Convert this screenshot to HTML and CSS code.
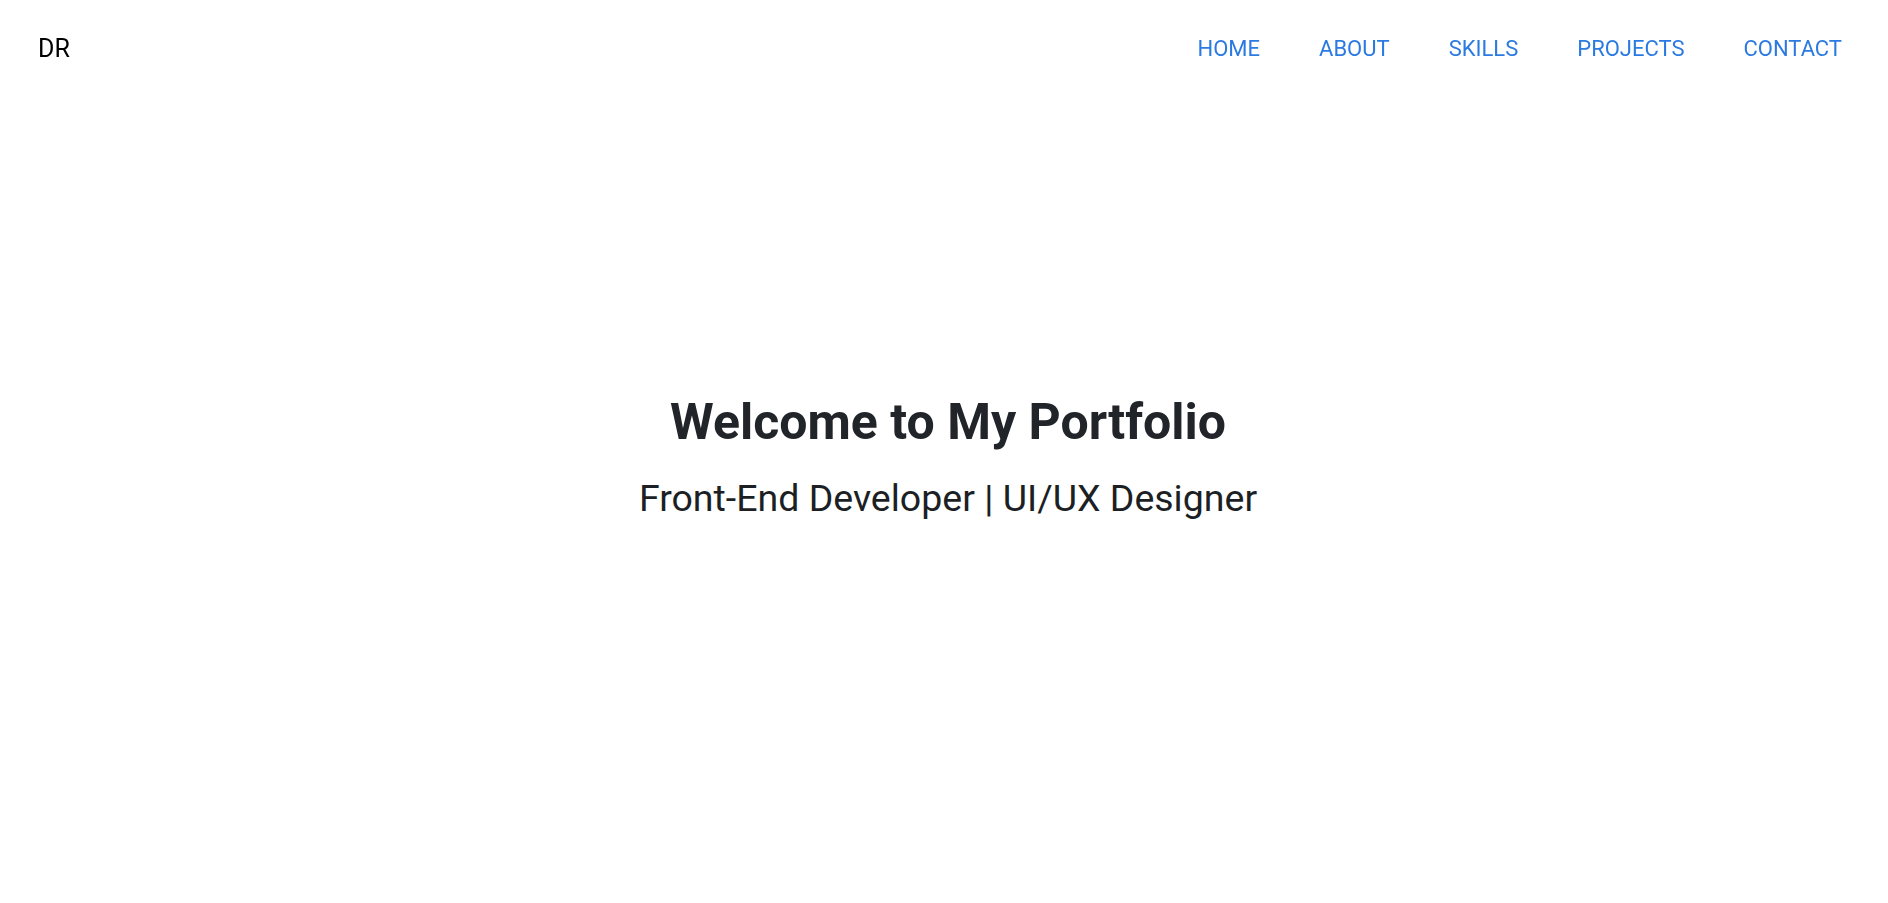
FILE: index.html
```html
<!DOCTYPE html>
<html lang="en">
<head>
<meta charset="utf-8">
<title>Portfolio</title>
<link rel="stylesheet" href="styles.css">
</head>
<body>
<header class="site-header">
  <div class="logo">DR</div>
  <nav class="nav">
    <a href="#home" class="nav-link">HOME</a>
    <a href="#about" class="nav-link">ABOUT</a>
    <a href="#skills" class="nav-link">SKILLS</a>
    <a href="#projects" class="nav-link">PROJECTS</a>
    <a href="#contact" class="nav-link">CONTACT</a>
  </nav>
</header>
<main>
  <section class="hero" id="home">
    <h1 class="hero-title">Welcome to My Portfolio</h1>
    <p class="hero-subtitle">Front-End Developer | UI/UX Designer</p>
  </section>
</main>
</body>
</html>
```

FILE: styles.css
```css
* { box-sizing: border-box; }
html, body {
  margin: 0;
  padding: 0;
  background: #ffffff;
  font-family: Roboto, "Liberation Sans", sans-serif;
}
.site-header {
  position: fixed;
  top: 0;
  left: 0;
  right: 0;
  display: flex;
  justify-content: space-between;
  align-items: center;
  padding: 35px 46px 0 38px;
}
.logo {
  font-size: 25px;
  line-height: 28px;
  color: #000000;
}
.nav {
  display: flex;
  gap: 59px;
}
.nav-link {
  font-size: 22px;
  line-height: 28px;
  color: #2a7ae2;
  text-decoration: none;
}
.hero {
  height: 100vh;
  padding-top: 16px;
  padding-left: 8px;
  display: flex;
  flex-direction: column;
  align-items: center;
  justify-content: center;
  text-align: center;
}
.hero-title {
  margin: 0 0 18px;
  font-size: 50px;
  line-height: 1.2;
  font-weight: 700;
  color: #212529;
}
.hero-subtitle {
  margin: 0;
  font-size: 37.5px;
  line-height: 1.5;
  color: #1c1f24;
}
```
